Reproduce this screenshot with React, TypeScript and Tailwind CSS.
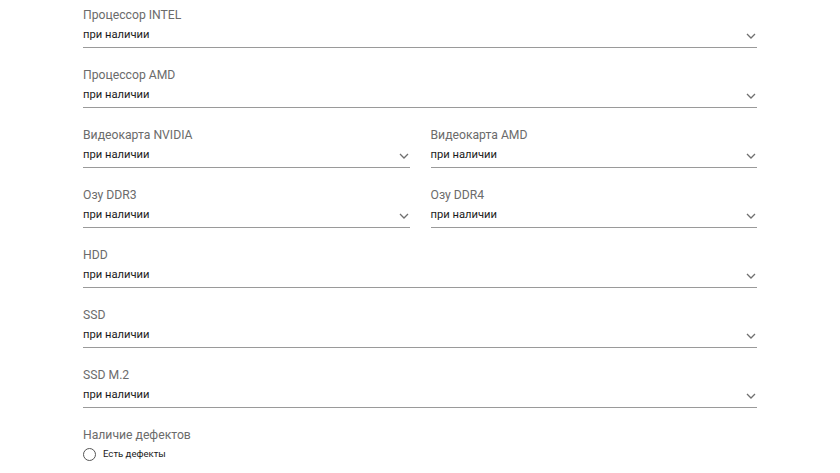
import React from "react";

const Chevron = () => (
  <svg width="10" height="6" viewBox="0 0 10 6" className="mr-[1px] shrink-0">
    <path d="M1 1 L5 5 L9 1" fill="none" stroke="#707070" strokeWidth="1.3" />
  </svg>
);

const Field = ({ label }: { label: string }) => (
  <div className="flex flex-col h-[60px] pt-[6px]">
    <div className="text-[12.2px] leading-[19px] text-[#6b6b6b]">{label}</div>
    <div className="flex items-center justify-between h-[23px] pt-[1px] pb-[2px] border-b border-[#9a9a9a]">
      <span className="text-[11.2px] text-[#1a1a1a]">при наличии</span>
      <Chevron />
    </div>
  </div>
);

export default function App() {
  return (
    <div
      className="w-[840px] h-[473px] bg-white overflow-hidden px-[83px]"
      style={{ fontFamily: "Roboto, 'Liberation Sans', sans-serif" }}
    >
      <Field label="Процессор INTEL" />
      <Field label="Процессор AMD" />
      <div className="grid grid-cols-2 gap-x-[21px]">
        <Field label="Видеокарта NVIDIA" />
        <Field label="Видеокарта AMD" />
        <Field label="Озу DDR3" />
        <Field label="Озу DDR4" />
      </div>
      <Field label="HDD" />
      <Field label="SSD" />
      <Field label="SSD M.2" />
      <div className="flex flex-col pt-[6px]">
        <div className="text-[12.2px] leading-[19px] text-[#6b6b6b]">Наличие дефектов</div>
        <label className="flex items-center gap-[7px] h-[18px]">
          <span className="w-[13px] h-[13px] rounded-full border border-[#555] shrink-0" />
          <span className="text-[9.6px] text-[#1a1a1a]">Есть дефекты</span>
        </label>
      </div>
    </div>
  );
}
